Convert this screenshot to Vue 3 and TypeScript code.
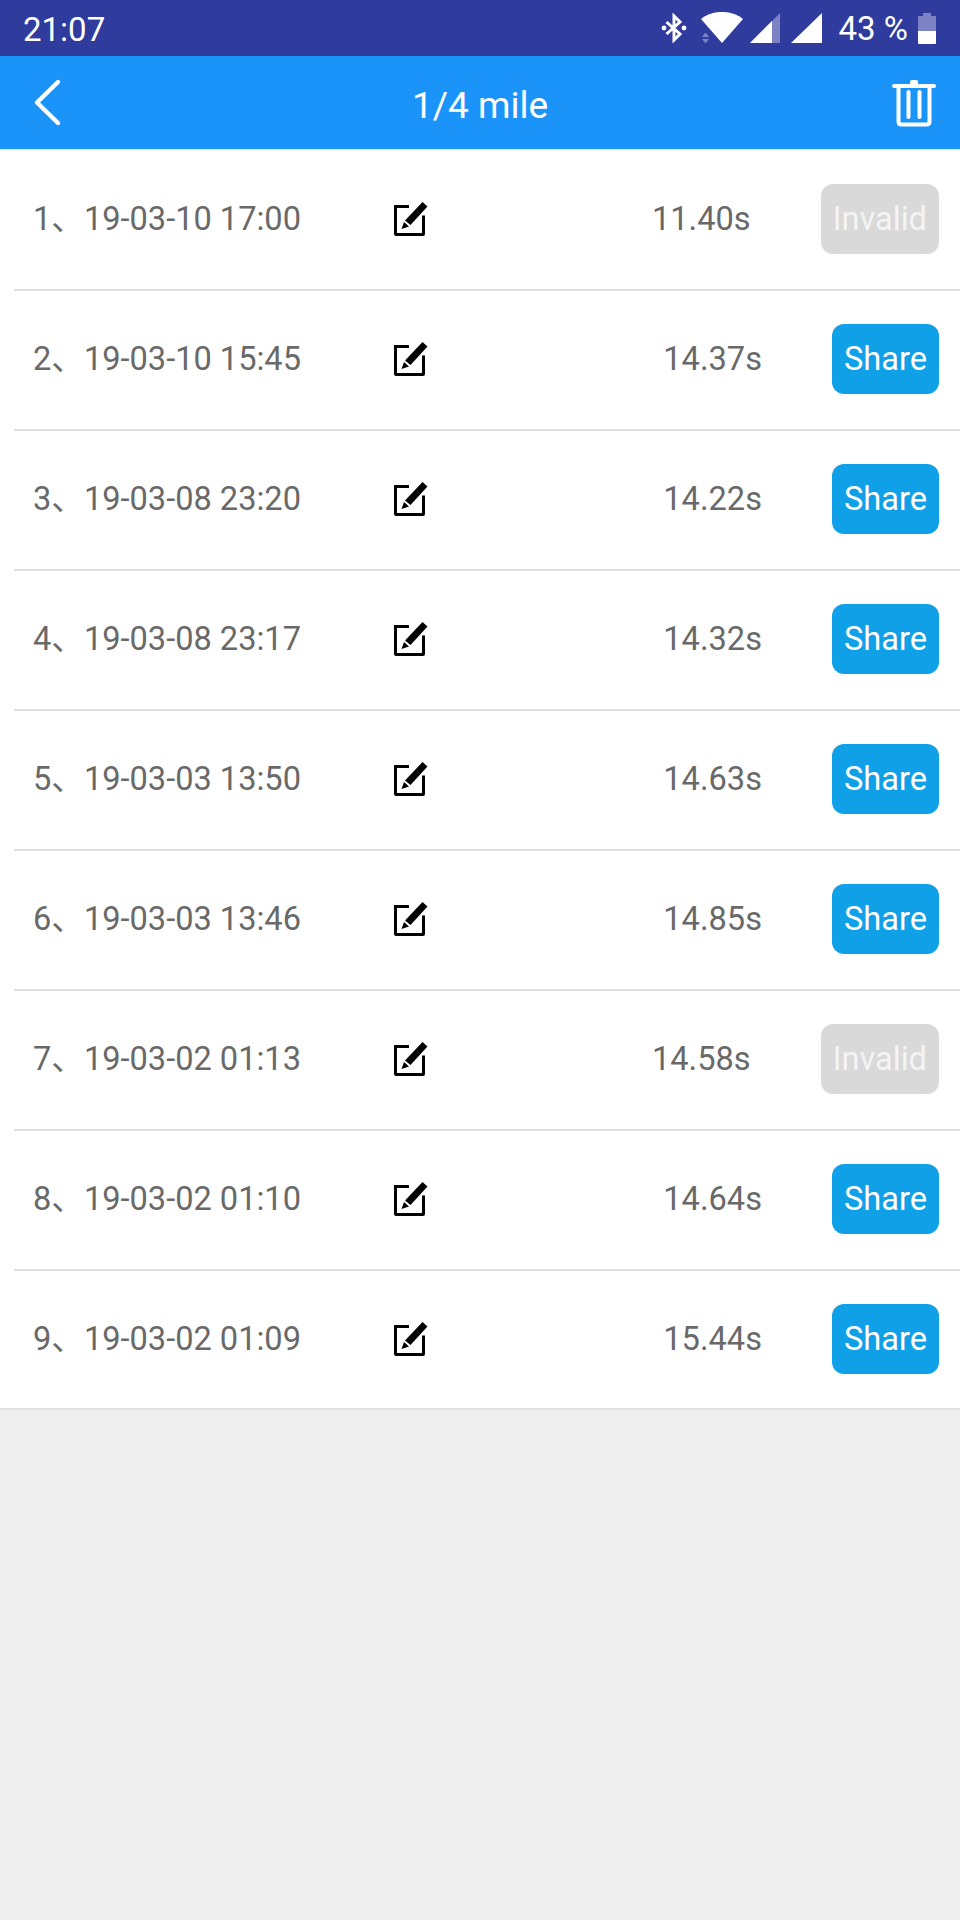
<script setup lang="ts">
interface Run {
  date: string;
  time: string;
  valid: boolean;
}

const runs: Run[] = [
  { date: "19-03-10 17:00", time: "11.40s", valid: false },
  { date: "19-03-10 15:45", time: "14.37s", valid: true },
  { date: "19-03-08 23:20", time: "14.22s", valid: true },
  { date: "19-03-08 23:17", time: "14.32s", valid: true },
  { date: "19-03-03 13:50", time: "14.63s", valid: true },
  { date: "19-03-03 13:46", time: "14.85s", valid: true },
  { date: "19-03-02 01:13", time: "14.58s", valid: false },
  { date: "19-03-02 01:10", time: "14.64s", valid: true },
  { date: "19-03-02 01:09", time: "15.44s", valid: true },
];
</script>

<template>
  <div class="page">
    <div class="status-bar">
      <span class="clock">21:07</span>
      <div class="status-icons">
        <svg class="ic-bt" width="26" height="30" viewBox="0 0 26 30">
          <path d="M5.5 9 L19 21 L13 27 V3 L19 9 L5.5 21" fill="none" stroke="#fff" stroke-width="3" />
          <circle cx="3" cy="15" r="2.4" fill="#fff" />
          <circle cx="23" cy="15" r="2.4" fill="#fff" />
        </svg>
        <svg class="ic-wifi" width="42" height="32" viewBox="0 0 42 32">
          <path d="M0 7 C11 -2.5 31 -2.5 42 7 L21 31 Z" fill="#fff" />
          <path d="M1 25 L4.5 20.5 L8 25 Z M1 27 L8 27 L4.5 31.5 Z" fill="#7c82c4" />
        </svg>
        <svg class="ic-sig" width="30" height="32" viewBox="0 0 30 32">
          <path d="M0 31 L30 1 V31 Z" fill="#7c82c4" />
          <path d="M0 31 L22 9 V31 Z" fill="#fff" />
        </svg>
        <svg class="ic-sig2" width="31" height="32" viewBox="0 0 31 32">
          <path d="M0 31 L31 1 V31 Z" fill="#fff" />
        </svg>
        <span class="battery-text">43 %</span>
        <svg class="ic-batt" width="18" height="32" viewBox="0 0 18 32">
          <path d="M5 1 H13 V4 H17 Q18 4 18 5 V31 Q18 32 17 32 H1 Q0 32 0 31 V5 Q0 4 1 4 H5 Z" fill="#7c82c4" />
          <path d="M0 19 H18 V31 Q18 32 17 32 H1 Q0 32 0 31 Z" fill="#fff" />
        </svg>
      </div>
    </div>

    <div class="header">
      <svg class="back" width="30" height="50" viewBox="0 0 30 50">
        <path d="M26 4 L5 24.5 L26 45" fill="none" stroke="#fff" stroke-width="4.4" stroke-linecap="round" stroke-linejoin="round" />
      </svg>
      <span class="title">1/4 mile</span>
      <svg class="trash" width="44" height="48" viewBox="0 0 44 48">
        <path d="M2 7 H42" fill="none" stroke="#fff" stroke-width="4" stroke-linecap="round" />
        <path d="M18 6 V3 Q18 1 20 1 H24 Q26 1 26 3 V6 Z" fill="#fff" />
        <path d="M6.5 8 V42.5 Q6.5 45.5 9.5 45.5 H34.5 Q37.5 45.5 37.5 42.5 V8" fill="none" stroke="#fff" stroke-width="4" />
        <path d="M16.5 13 V38 M27.5 13 V38" fill="none" stroke="#fff" stroke-width="4" stroke-linecap="round" />
      </svg>
    </div>

    <div class="list">
      <div v-for="(run, i) in runs" :key="i" class="row">
        <span class="date">{{ i + 1 }}、{{ run.date }}</span>
        <svg class="edit" width="36" height="36" viewBox="0 0 36 36">
          <path d="M17 5.5 H3.5 V33 Q3.5 33.5 4 33.5 H31 Q31.5 33.5 31.5 33 V14.5" fill="none" stroke="#000" stroke-width="3" />
          <path d="M30.5 1 L35.5 5.5 L18.5 24 L13 19.5 Z" fill="#000" />
          <path d="M12 21 L17 25.5 L9.5 28 Z" fill="#000" />
        </svg>
        <span class="time">{{ run.time }}</span>
        <button class="action" :class="{ invalid: !run.valid }">{{ run.valid ? "Share" : "Invalid" }}</button>
      </div>
    </div>
  </div>
</template>

<style>
html,
body {
  margin: 0;
  background: #eeeeee;
}
</style>

<style scoped>
.page {
  width: 960px;
  height: 1920px;
  background: #eeeeee;
  font-family: Roboto, "Noto Sans CJK SC", sans-serif;
  overflow: hidden;
}

.status-bar {
  height: 56px;
  box-sizing: border-box;
  background: #303b9e;
  color: #fff;
  display: flex;
  align-items: center;
  justify-content: space-between;
  padding: 2px 24px 0 23px;
  font-size: 33px;
}

.status-icons {
  display: flex;
  align-items: center;
  margin-top: -2px;
}

.ic-bt {
  margin-right: 14px;
}

.ic-wifi {
  margin-right: 7px;
}

.ic-sig {
  margin-right: 11px;
}

.ic-sig2 {
  margin-right: 17px;
}

.battery-text {
  margin-right: 10px;
}

.header {
  height: 93px;
  background: #1a94f8;
  border-bottom: 1px solid #d8e8f4;
  display: flex;
  align-items: center;
  padding: 0 24px 0 32px;
  color: #fff;
  font-size: 37px;
}

.title {
  flex: 1;
  text-align: center;
  margin-left: 6px;
  padding-top: 6px;
}

.list {
  background: #fff;
  padding-top: 1px;
  border-bottom: 2px solid #e0e0e0;
}

.row {
  height: 136px;
  margin-left: 14px;
  padding: 0 21px 2px 19px;
  border-bottom: 2px solid #e0e0e0;
  display: flex;
  align-items: center;
  font-size: 32.6px;
  line-height: 40px;
  color: #696969;
}

.row:last-child {
  padding-bottom: 1px;
  border-bottom: none;
}

.date {
  width: 359px;
  white-space: nowrap;
}

.edit {
  flex: none;
}

.time {
  margin-left: auto;
  margin-right: 70px;
}

.action {
  height: 70px;
  padding: 0 12px 1px;
  border: none;
  border-radius: 12px;
  background: #0fa0e8;
  color: #fff;
  font-family: inherit;
  font-size: 32.6px;
}

.action.invalid {
  background: #d9d9d9;
  color: #f4f4f4;
}
</style>
